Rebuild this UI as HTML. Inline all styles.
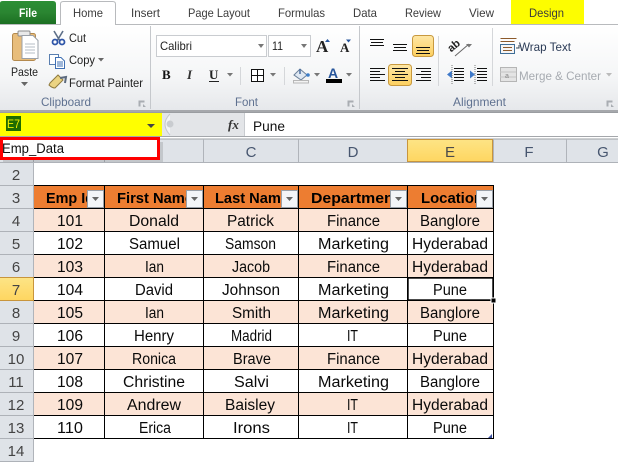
<!DOCTYPE html>
<html><head><meta charset="utf-8"><style>
html,body{margin:0;padding:0;background:#fff;width:618px;height:462px;overflow:hidden}
svg{display:block;font-family:"Liberation Sans",sans-serif}
.t{font-size:12px;fill:#3c3c3c}
.r{font-size:12px;fill:#222}
.g{font-size:12px;fill:#5f7190}
.c{font-size:15.5px;fill:#0a0a0a;text-anchor:middle}
.h{font-size:15px;fill:#000;font-weight:bold}
.n{font-size:15px;fill:#444;text-anchor:middle}
.l{font-size:15px;fill:#47566f;text-anchor:middle}
</style></head><body>
<svg width="618" height="462" viewBox="0 0 618 462" xmlns="http://www.w3.org/2000/svg">
<defs>
<linearGradient id="rb" x1="0" y1="0" x2="0" y2="1"><stop offset="0" stop-color="#fff"/><stop offset=".6" stop-color="#f5f6f7"/><stop offset="1" stop-color="#e6e8eb"/></linearGradient>
<linearGradient id="gr" x1="0" y1="0" x2="0" y2="1"><stop offset="0" stop-color="#2b8f35"/><stop offset=".5" stop-color="#2a8531"/><stop offset="1" stop-color="#1c6f22"/></linearGradient>
<linearGradient id="ac" x1="0" y1="0" x2="0" y2="1"><stop offset="0" stop-color="#fee7a6"/><stop offset="1" stop-color="#fdd05f"/></linearGradient>
<linearGradient id="sel" x1="0" y1="0" x2="0" y2="1"><stop offset="0" stop-color="#fde485"/><stop offset="1" stop-color="#fed661"/></linearGradient>
</defs>

<!-- tabs -->
<rect width="618" height="25" fill="#fff"/>
<rect x="0" y="24" width="618" height="1" fill="#b8babd"/>
<path d="M0 24V3Q0 1 3 1H53Q56 1 56 4V24Z" fill="url(#gr)"/>
<text x="19" y="17" font-size="12" font-weight="bold" fill="#fff" textLength="18" lengthAdjust="spacingAndGlyphs">File</text>
<path d="M60.500 25V4Q60.500 1.500 63.500 1.500H112.500Q115.500 1.500 115.500 4V25" fill="#fff" stroke="#b8babd"/>
<text class="t" x="73" y="17" textLength="30" lengthAdjust="spacingAndGlyphs">Home</text>
<text class="t" x="131" y="17" textLength="29" lengthAdjust="spacingAndGlyphs">Insert</text>
<text class="t" x="188" y="17" textLength="62" lengthAdjust="spacingAndGlyphs">Page Layout</text>
<text class="t" x="278" y="17" textLength="47" lengthAdjust="spacingAndGlyphs">Formulas</text>
<text class="t" x="353" y="17" textLength="24" lengthAdjust="spacingAndGlyphs">Data</text>
<text class="t" x="405" y="17" textLength="36" lengthAdjust="spacingAndGlyphs">Review</text>
<text class="t" x="469" y="17" textLength="25" lengthAdjust="spacingAndGlyphs">View</text>
<rect x="511" y="0" width="73" height="24" fill="#fdfd00"/>
<text class="t" x="529" y="17" textLength="35" lengthAdjust="spacingAndGlyphs">Design</text>

<!-- ribbon -->
<rect x="0" y="25" width="618" height="85" fill="url(#rb)"/>
<rect x="116" y="24" width="502" height="1" fill="#b8babd"/>
<rect x="60" y="24" width="1" height="1" fill="#b8babd"/>
<rect x="61" y="24" width="54" height="1" fill="#fff"/>
<rect x="150" y="26" width="1" height="83" fill="#c5c8cc"/>
<rect x="359" y="26" width="1" height="83" fill="#c5c8cc"/>
<rect x="0" y="110" width="618" height="2" fill="#a6a8ac"/>

<!-- paste -->
<rect x="12.500" y="33.500" width="23" height="27" rx="2" fill="#e8bd7b" stroke="#b48a4e"/>
<rect x="18" y="31" width="12" height="5" rx="1" fill="#e9e9e9" stroke="#8b8b8b"/>
<path d="M22 35.500H33L38 40.500V58.500H22Z" fill="#fff" stroke="#9aa0a8"/>
<path d="M25 44H35M25 47H35M25 50H35M25 53H35" stroke="#b5bcc6"/>
<text class="r" x="11" y="76" textLength="27" lengthAdjust="spacingAndGlyphs">Paste</text>
<path d="M21 82h7l-3.500 4z" fill="#666"/>
<!-- cut -->
<path d="M54 31L60 41M63 31L57 41" stroke="#5d6f88" stroke-width="1.600"/>
<circle cx="55" cy="42" r="2.500" fill="none" stroke="#2e55a8" stroke-width="1.800"/><circle cx="62" cy="42" r="2.500" fill="none" stroke="#2e55a8" stroke-width="1.800"/>
<text class="r" x="69" y="42" textLength="17" lengthAdjust="spacingAndGlyphs">Cut</text>
<!-- copy -->
<rect x="49.500" y="54.500" width="9" height="10" fill="#fff" stroke="#5a7fb0"/>
<path d="M55.500 57.500H61L64.500 61V68.500H55.500Z" fill="#fff" stroke="#3f6fb3"/>
<path d="M57 62H63M57 64H63M57 66H63" stroke="#3f6fb3"/>
<text class="r" x="69" y="64" textLength="26" lengthAdjust="spacingAndGlyphs">Copy</text>
<path d="M98 58h6l-3 3.500z" fill="#666"/>
<!-- painter -->
<path d="M50 83L58 75L63 80L55 88Q52 88 49 85Z" fill="#ebd382" stroke="#8f7a3e"/>
<path d="M60 78L66 77L65 83" fill="none" stroke="#5c6a7e" stroke-width="2"/>
<text class="r" x="69" y="87" textLength="74" lengthAdjust="spacingAndGlyphs">Format Painter</text>
<text class="g" x="41" y="106" textLength="50" lengthAdjust="spacingAndGlyphs">Clipboard</text>
<path d="M138.500 100.500h6v2h-4v4h-2zM143 104l3 3h-3z" fill="#a9adb2"/>

<!-- font -->
<rect x="156.500" y="35.500" width="110" height="21" fill="#fff" stroke="#c9ccd0"/>
<rect x="268.500" y="35.500" width="42" height="21" fill="#fff" stroke="#c9ccd0"/>
<text class="r" x="160" y="50" textLength="32" lengthAdjust="spacingAndGlyphs">Calibri</text>
<text class="r" x="272" y="50" textLength="11" lengthAdjust="spacingAndGlyphs">11</text>
<path d="M258 44h6l-3 4zM301 44h6l-3 4z" fill="#777"/>
<text x="316" y="52" font-family="Liberation Serif" font-size="17" font-weight="bold" fill="#222">A</text>
<path d="M325 42l2.500-3 2.500 3z" fill="#27559b"/>
<text x="340" y="52" font-family="Liberation Serif" font-size="13" font-weight="bold" fill="#222">A</text>
<path d="M346 39.500h5l-2.500 3z" fill="#27559b"/>
<text x="162" y="79" font-family="Liberation Serif" font-size="13" font-weight="bold" fill="#111">B</text>
<text x="187" y="79" font-family="Liberation Serif" font-size="13" font-weight="bold" font-style="italic" fill="#333">I</text>
<text x="209" y="79" font-family="Liberation Serif" font-size="13" font-weight="bold" fill="#222">U</text>
<rect x="209" y="81" width="10" height="1" fill="#222"/>
<path d="M227 73h6l-3 3.500z" fill="#777"/>
<rect x="240" y="67" width="1" height="18" fill="#d5d7da"/>
<rect x="251.500" y="69.500" width="12" height="12" fill="#fff" stroke="#111"/>
<path d="M257.500 69.500v12M251.500 75.500h12" stroke="#111"/>
<path d="M270 73h6l-3 3.500z" fill="#777"/>
<rect x="284" y="67" width="1" height="18" fill="#d5d7da"/>
<path d="M294 75L300 69L307 75L301 80Z" fill="#dfe8f2" stroke="#6b7f99"/>
<path d="M300 69V74" stroke="#4a6ea0" stroke-width="1.500"/>
<circle cx="308" cy="75" r="1.800" fill="#3c7dc9"/>
<rect x="293.500" y="80.500" width="15" height="2.500" fill="#f3f3f3" stroke="#b7b7b7"/>
<path d="M314 73h6l-3 3.500z" fill="#777"/>
<text x="328" y="78" font-family="Liberation Sans" font-size="14" font-weight="bold" fill="#27559b">A</text>
<rect x="326" y="79" width="16" height="4" fill="#000"/>
<path d="M346 73h6l-3 3.500z" fill="#777"/>
<text class="g" x="235" y="106" textLength="23" lengthAdjust="spacingAndGlyphs">Font</text>
<path d="M347.500 100.500h6v2h-4v4h-2zM352 104l3 3h-3z" fill="#a9adb2"/>

<!-- alignment -->
<path d="M370 39.500h14M371 42.500h12M370 45.500h14" stroke="#111"/>
<path d="M393 44.500h14M394 47.500h12M393 50.500h14" stroke="#111"/>
<rect x="412.500" y="35.500" width="21" height="21" rx="3" fill="url(#ac)" stroke="#c8993f"/>
<path d="M416 47.500h14M417 50.500h12M416 53.500h14" stroke="#111"/>
<path d="M370 68.500h15M370 71.500h10M370 74.500h15M370 77.500h10M370 80.500h15" stroke="#111"/>
<rect x="388.500" y="64.500" width="23" height="21" rx="3" fill="url(#ac)" stroke="#c8993f"/>
<path d="M392 68.500h16M395 71.500h10M392 74.500h16M395 77.500h10M392 80.500h16" stroke="#111"/>
<path d="M416 68.500h15M421 71.500h10M416 74.500h15M421 77.500h10M416 80.500h15" stroke="#111"/>
<rect x="438" y="36" width="1" height="50" fill="#d5d7da"/>
<text x="448" y="50" font-size="11" font-weight="bold" fill="#222" transform="rotate(-40 453 47)">ab</text>
<path d="M455 56L469 44" stroke="#666"/>
<path d="M466 44h6l-3 3.500z" fill="#777"/>
<path d="M454 68.500h10M454 71.500h10M454 74.500h10M454 77.500h10M454 80.500h10" stroke="#111"/>
<path d="M447 74.500l5-4v8z" fill="#3f79c9"/><path d="M452 84V65" stroke="#777" stroke-dasharray="1 1"/>
<path d="M477 68.500h10M477 71.500h10M477 74.500h10M477 77.500h10M477 80.500h10" stroke="#111"/>
<path d="M475 74.500l-5-4v8z" fill="#3f79c9"/><path d="M475 84V65" stroke="#777" stroke-dasharray="1 1"/>
<rect x="492" y="28" width="1" height="58" fill="#d5d7da"/>
<rect x="500.500" y="44.500" width="14" height="9" fill="#f5f5f5" stroke="#3e6d96"/>
<path d="M503 47.500h9M503 50.500h9" stroke="#8c5a2b"/>
<path d="M500.500 38.500h16M500.500 41.500h14" stroke="#8c5a2b"/>
<path d="M519 45v3h-3" fill="none" stroke="#345"/>
<text class="r" x="519" y="51" textLength="52" lengthAdjust="spacingAndGlyphs" style="fill:#2a3a55">Wrap Text</text>
<rect x="500.500" y="67.500" width="16" height="14" fill="#e4e4e4" stroke="#b5b5b5"/>
<path d="M500 72h16M500 77h16" stroke="#c5c5c5"/>
<text x="505" y="78" font-size="7" fill="#888">a</text>
<text class="g" x="519" y="80" textLength="82" lengthAdjust="spacingAndGlyphs" style="fill:#a7abb1">Merge &amp; Center</text>
<path d="M606 73h6l-3 3.500z" fill="#bbb"/>
<text class="g" x="453" y="106" textLength="53" lengthAdjust="spacingAndGlyphs">Alignment</text>
<path d="M606.500 100.500h6v2h-4v4h-2zM611 104l3 3h-3z" fill="#a9adb2"/>

<!-- formula bar -->
<rect x="0" y="112" width="618" height="26" fill="#fff"/>
<rect x="0" y="112" width="618" height="1" fill="#9a9da1"/>
<rect x="162" y="113" width="83" height="23" fill="#e3e5e8"/>
<rect x="0" y="113" width="162" height="23" fill="#ffff00"/>
<rect x="6" y="116" width="15" height="15" fill="#1f6b00"/>
<text x="7" y="128" font-size="12" fill="#f0f000" textLength="13" lengthAdjust="spacingAndGlyphs">E7</text>
<path d="M147 124h8l-4 4z" fill="#444"/>
<path d="M170 114Q160 124 170 135" fill="#f2f3f5" stroke="#c4c7cb"/>
<circle cx="170" cy="124" r="3.500" fill="#c9ccd0"/>
<text x="228" y="129" font-family="Liberation Serif" font-size="13" font-weight="bold" font-style="italic" fill="#333">fx</text>
<rect x="245" y="113" width="373" height="23" fill="#fff"/>
<rect x="244" y="113" width="1" height="23" fill="#c9ccd0"/>
<text x="253" y="131" font-size="14" fill="#111" textLength="32" lengthAdjust="spacingAndGlyphs">Pune</text>
<rect x="0" y="136" width="618" height="1" fill="#a4a7ab"/>

<!-- column headers -->
<rect x="0" y="139" width="618" height="23" fill="#dfe3e8"/>
<rect x="0" y="138.500" width="618" height="1" fill="#9ea1a5"/>
<rect x="0" y="162" width="618" height="1" fill="#aeb2b8"/>
<g fill="#b0b4ba"><rect x="104" y="139" width="1" height="23"/><rect x="203" y="139" width="1" height="23"/><rect x="298" y="139" width="1" height="23"/><rect x="566" y="139" width="1" height="23"/><rect x="493" y="139" width="1" height="23"/></g>
<rect x="407.500" y="139.500" width="85" height="22" fill="url(#sel)" stroke="#c8953c"/>
<text class="l" x="251" y="157">C</text><text class="l" x="353" y="157">D</text>
<text class="l" x="450" y="157" style="fill:#4a4a4a">E</text><text class="l" x="529" y="157">F</text><text class="l" x="603" y="157">G</text>

<!-- row headers -->
<rect x="0" y="163" width="33" height="299" fill="#dfe3e8"/>
<rect x="33" y="139" width="1" height="323" fill="#b0b4ba"/>
<g fill="#aeb2b8">
<rect y="185" width="33" height="1"/><rect y="208" width="33" height="1"/><rect y="231" width="33" height="1"/><rect y="254" width="33" height="1"/><rect y="323" width="33" height="1"/><rect y="346" width="33" height="1"/><rect y="369" width="33" height="1"/><rect y="392" width="33" height="1"/><rect y="415" width="33" height="1"/><rect y="438" width="33" height="1"/><rect y="461" width="33" height="1"/>
</g>
<rect x="0" y="277" width="34" height="24" fill="#c8953c"/>
<rect x="0" y="278" width="33" height="22" fill="url(#sel)"/>
<text class="n" x="16" y="180">2</text><text class="n" x="16" y="203">3</text><text class="n" x="16" y="226">4</text><text class="n" x="16" y="249">5</text><text class="n" x="16" y="272">6</text><text class="n" x="16" y="295">7</text><text class="n" x="16" y="318">8</text><text class="n" x="16" y="341">9</text><text class="n" x="16" y="364">10</text><text class="n" x="16" y="387">11</text><text class="n" x="16" y="410">12</text><text class="n" x="16" y="433">13</text><text class="n" x="16" y="456">14</text>

<!-- table bg -->
<rect x="34" y="185" width="459" height="23" fill="#ed7d31"/>
<g fill="#fce4d6"><rect x="34" y="208" width="459" height="23"/><rect x="34" y="254" width="459" height="23"/><rect x="34" y="300" width="459" height="23"/><rect x="34" y="346" width="459" height="23"/><rect x="34" y="392" width="459" height="23"/></g>
<g fill="#000">
<rect x="34" y="185" width="460" height="1"/><rect x="34" y="208" width="460" height="1"/><rect x="34" y="231" width="460" height="1"/><rect x="34" y="254" width="460" height="1"/><rect x="34" y="277" width="460" height="1"/><rect x="34" y="300" width="460" height="1"/><rect x="34" y="323" width="460" height="1"/><rect x="34" y="346" width="460" height="1"/><rect x="34" y="369" width="460" height="1"/><rect x="34" y="392" width="460" height="1"/><rect x="34" y="415" width="460" height="1"/><rect x="34" y="438" width="460" height="1"/>
<rect x="104" y="185" width="1" height="254"/><rect x="203" y="185" width="1" height="254"/><rect x="298" y="185" width="1" height="254"/><rect x="407" y="185" width="1" height="254"/><rect x="493" y="185" width="1" height="254"/>
</g>

<!-- header text -->
<text class="h" x="46" y="203" textLength="48" lengthAdjust="spacingAndGlyphs">Emp Id</text>
<text class="h" x="117" y="203" textLength="76" lengthAdjust="spacingAndGlyphs">First Name</text>
<text class="h" x="215" y="203" textLength="74" lengthAdjust="spacingAndGlyphs">Last Name</text>
<text class="h" x="311" y="203" textLength="88" lengthAdjust="spacingAndGlyphs">Department</text>
<text class="h" x="421" y="203" textLength="62" lengthAdjust="spacingAndGlyphs">Location</text>
<!-- filter buttons -->
<g fill="#f3f5f8" stroke="#9aa0a8">
<rect x="87.500" y="190.500" width="16" height="17"/><rect x="186.500" y="190.500" width="16" height="17"/><rect x="281.500" y="190.500" width="16" height="17"/><rect x="390.500" y="190.500" width="16" height="17"/><rect x="476.500" y="190.500" width="16" height="17"/>
</g>
<g fill="#666"><path d="M92 197h7l-3.500 4z"/><path d="M191 197h7l-3.500 4z"/><path d="M286 197h7l-3.500 4z"/><path d="M395 197h7l-3.500 4z"/><path d="M481 197h7l-3.500 4z"/></g>

<!-- data -->
<text class="c" x="70" y="226" textLength="26" lengthAdjust="spacingAndGlyphs">101</text><text class="c" x="154" y="226" textLength="50" lengthAdjust="spacingAndGlyphs">Donald</text><text class="c" x="250.500" y="226" textLength="47" lengthAdjust="spacingAndGlyphs">Patrick</text><text class="c" x="353.500" y="226" textLength="53" lengthAdjust="spacingAndGlyphs">Finance</text><text class="c" x="450" y="226" textLength="60" lengthAdjust="spacingAndGlyphs">Banglore</text>
<text class="c" x="70" y="249" textLength="26" lengthAdjust="spacingAndGlyphs">102</text><text class="c" x="154.500" y="249" textLength="51" lengthAdjust="spacingAndGlyphs">Samuel</text><text class="c" x="250.500" y="249" textLength="51" lengthAdjust="spacingAndGlyphs">Samson</text><text class="c" x="353.500" y="249" textLength="71" lengthAdjust="spacingAndGlyphs">Marketing</text><text class="c" x="450" y="249" textLength="76" lengthAdjust="spacingAndGlyphs">Hyderabad</text>
<text class="c" x="70" y="272" textLength="26" lengthAdjust="spacingAndGlyphs">103</text><text class="c" x="154.500" y="272" textLength="19" lengthAdjust="spacingAndGlyphs">Ian</text><text class="c" x="251" y="272" textLength="38" lengthAdjust="spacingAndGlyphs">Jacob</text><text class="c" x="353.500" y="272" textLength="53" lengthAdjust="spacingAndGlyphs">Finance</text><text class="c" x="450" y="272" textLength="76" lengthAdjust="spacingAndGlyphs">Hyderabad</text>
<text class="c" x="70" y="295" textLength="26" lengthAdjust="spacingAndGlyphs">104</text><text class="c" x="154" y="295" textLength="38" lengthAdjust="spacingAndGlyphs">David</text><text class="c" x="251" y="295" textLength="58" lengthAdjust="spacingAndGlyphs">Johnson</text><text class="c" x="353.500" y="295" textLength="71" lengthAdjust="spacingAndGlyphs">Marketing</text><text class="c" x="450" y="295" textLength="34" lengthAdjust="spacingAndGlyphs">Pune</text>
<text class="c" x="70" y="318" textLength="26" lengthAdjust="spacingAndGlyphs">105</text><text class="c" x="154.500" y="318" textLength="19" lengthAdjust="spacingAndGlyphs">Ian</text><text class="c" x="251.500" y="318" textLength="39" lengthAdjust="spacingAndGlyphs">Smith</text><text class="c" x="353.500" y="318" textLength="71" lengthAdjust="spacingAndGlyphs">Marketing</text><text class="c" x="450" y="318" textLength="60" lengthAdjust="spacingAndGlyphs">Banglore</text>
<text class="c" x="70" y="341" textLength="26" lengthAdjust="spacingAndGlyphs">106</text><text class="c" x="154" y="341" textLength="40" lengthAdjust="spacingAndGlyphs">Henry</text><text class="c" x="251.500" y="341" textLength="41" lengthAdjust="spacingAndGlyphs">Madrid</text><text class="c" x="352.500" y="341" textLength="11" lengthAdjust="spacingAndGlyphs">IT</text><text class="c" x="450" y="341" textLength="34" lengthAdjust="spacingAndGlyphs">Pune</text>
<text class="c" x="70" y="364" textLength="26" lengthAdjust="spacingAndGlyphs">107</text><text class="c" x="154" y="364" textLength="44" lengthAdjust="spacingAndGlyphs">Ronica</text><text class="c" x="252" y="364" textLength="38" lengthAdjust="spacingAndGlyphs">Brave</text><text class="c" x="353.500" y="364" textLength="53" lengthAdjust="spacingAndGlyphs">Finance</text><text class="c" x="450" y="364" textLength="76" lengthAdjust="spacingAndGlyphs">Hyderabad</text>
<text class="c" x="70" y="387" textLength="26" lengthAdjust="spacingAndGlyphs">108</text><text class="c" x="154" y="387" textLength="62" lengthAdjust="spacingAndGlyphs">Christine</text><text class="c" x="251.500" y="387" textLength="35" lengthAdjust="spacingAndGlyphs">Salvi</text><text class="c" x="353.500" y="387" textLength="71" lengthAdjust="spacingAndGlyphs">Marketing</text><text class="c" x="450" y="387" textLength="60" lengthAdjust="spacingAndGlyphs">Banglore</text>
<text class="c" x="70" y="410" textLength="26" lengthAdjust="spacingAndGlyphs">109</text><text class="c" x="154" y="410" textLength="54" lengthAdjust="spacingAndGlyphs">Andrew</text><text class="c" x="250" y="410" textLength="50" lengthAdjust="spacingAndGlyphs">Baisley</text><text class="c" x="352.500" y="410" textLength="11" lengthAdjust="spacingAndGlyphs">IT</text><text class="c" x="450" y="410" textLength="76" lengthAdjust="spacingAndGlyphs">Hyderabad</text>
<text class="c" x="70" y="433" textLength="26" lengthAdjust="spacingAndGlyphs">110</text><text class="c" x="155" y="433" textLength="32" lengthAdjust="spacingAndGlyphs">Erica</text><text class="c" x="251.500" y="433" textLength="37" lengthAdjust="spacingAndGlyphs">Irons</text><text class="c" x="352.500" y="433" textLength="11" lengthAdjust="spacingAndGlyphs">IT</text><text class="c" x="450" y="433" textLength="34" lengthAdjust="spacingAndGlyphs">Pune</text>

<!-- selected cell -->
<rect x="408" y="278" width="85" height="22" fill="none" stroke="#000" stroke-width="2"/>
<rect x="409" y="279" width="83" height="20" fill="none" stroke="#fff" stroke-width="0.600"/>
<rect x="491" y="298" width="5" height="5" fill="#000" stroke="#fff" stroke-width="1"/>
<!-- resize corner -->
<path d="M492 434v4h-4z" fill="#3a4fa0"/>

<!-- name box dropdown -->
<rect x="3" y="142" width="160" height="20" fill="#000" opacity=".12"/>
<rect x="1.500" y="138.500" width="157" height="20" fill="#fff" stroke="#f00" stroke-width="3"/>
<text x="2" y="153" font-size="13.500" fill="#111" textLength="62" lengthAdjust="spacingAndGlyphs">Emp_Data</text>
</svg>
</body></html>
